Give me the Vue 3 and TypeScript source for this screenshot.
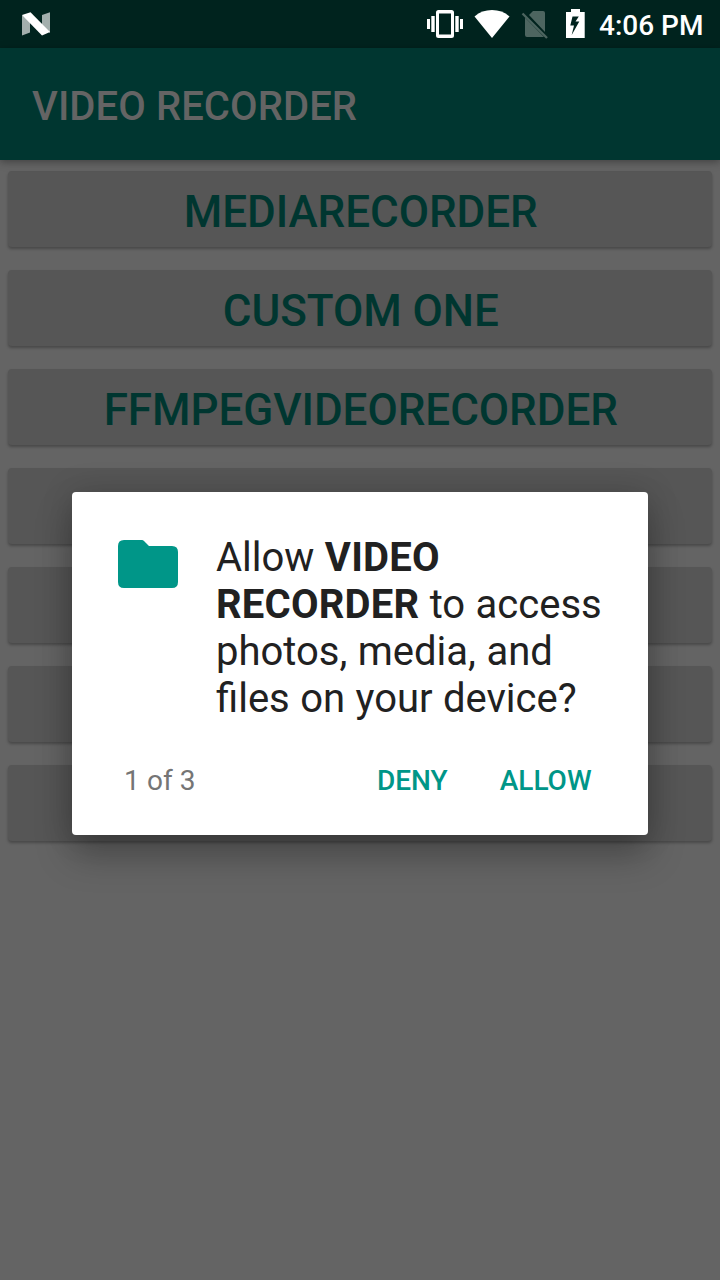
<script setup lang="ts">
const buttons: string[] = ['MEDIARECORDER', 'CUSTOM ONE', 'FFMPEGVIDEORECORDER', '', '', '', '']
</script>

<template>
  <div class="screen">
    <header class="status">
      <svg class="logo" width="28" height="24" viewBox="0 0 28 24">
        <path d="M0 3V23.500L8 20.500V8ZM28 .3L20 3V14L28 21Z" fill="#a3afad" />
        <path d="M0 3L8.500 .3 28 20 20 23.500Z" fill="#fff" />
      </svg>
      <svg class="icons" width="145" height="48" viewBox="0 0 145 48">
        <g fill="#fff">
          <path d="M17 19h3v10h-3zM21.300 16h3.400v16H21.300zM45.300 16H48.700v16h-3.400zM50 19h3v10h-3z" />
          <path fill-rule="evenodd" d="M28.500 10h13q2.500 0 2.500 2.500v23q0 2.500-2.500 2.500h-13q-2.500 0-2.500-2.500v-23q0-2.500 2.500-2.500ZM29 13.500v21h12v-21Z" />
          <path d="M64.500 16.400Q72 10 82 10T99.500 16.400L82 38Z" />
        </g>
        <path d="M119 15L123 11H133Q135 11 135 13V32ZM115 17.500L134 37H117Q115 37 115 35Z" fill="#4d6560" />
        <path d="M112.500 13.500L137 38" stroke="#4d6560" stroke-width="2.300" />
      </svg>
      <svg class="battery" width="20" height="30" viewBox="0 0 20 30">
        <path fill="#fff" fill-rule="evenodd" d="M6 0h9v3h4.700v26H1V3h5ZM7.500 7.500L5.300 16.500H9L6.700 26 14.300 12.500H10.500L13.800 7.500Z" />
      </svg>
      <span class="time">4:06 PM</span>
    </header>
    <div class="bar">VIDEO RECORDER</div>
    <main class="list">
      <button v-for="(label, i) in buttons" :key="i" class="item">{{ label }}</button>
    </main>
    <section class="dialog">
      <div class="message">
        <svg class="folder" width="60" height="48" viewBox="0 0 60 48">
          <path d="M6 0H24Q25 0 26 1L31 6H54Q60 6 60 12V42Q60 48 54 48H6Q0 48 0 42V6Q0 0 6 0Z" fill="#009688" />
        </svg>
        <p>Allow <b>VIDEO<br>RECORDER</b> to access<br>photos, media, and<br>files on your device?</p>
      </div>
      <div class="actions">
        <span class="count">1 of 3</span>
        <button class="deny">DENY</button>
        <button class="allow">ALLOW</button>
      </div>
    </section>
  </div>
</template>

<style>
body { margin: 0; }
</style>

<style scoped>
.screen {
  position: relative;
  width: 720px;
  height: 1280px;
  overflow: hidden;
  background: #646464;
  font-family: Roboto, sans-serif;
}
button {
  border: 0;
  padding: 0;
  background: none;
  font-family: inherit;
  font-weight: 500;
  white-space: nowrap;
}
.status {
  display: flex;
  height: 48px;
  background: #00231e;
  color: #fff;
}
.logo { margin: 12px 0 0 22px; flex: none; }
.icons { margin-left: 360px; flex: none; }
.battery { margin: 9px 0 0 10px; flex: none; }
.time {
  margin-left: 14px;
  font-size: 28px;
  font-weight: 500;
  line-height: 51px;
  white-space: nowrap;
}
.bar {
  position: relative;
  height: 112px;
  box-sizing: border-box;
  padding-left: 32px;
  background: #003630;
  box-shadow: 0 2px 8px rgba(0, 0, 0, .35);
  color: #646464;
  font-size: 40px;
  font-weight: 500;
  letter-spacing: .09px;
  line-height: 118px;
}
.list {
  display: flex;
  flex-direction: column;
  gap: 23px;
  padding: 11px 8px 0;
}
.item {
  height: 76px;
  border-radius: 4px;
  background: #565656;
  box-shadow: 0 2px 3px rgba(0, 0, 0, .28);
  color: #003630;
  font-size: 44px;
  letter-spacing: -.05px;
  line-height: 82px;
  text-indent: 1.5px;
}
.dialog {
  position: absolute;
  left: 72px;
  top: 492px;
  width: 576px;
  height: 343px;
  box-sizing: border-box;
  padding: 42px 46px 0;
  border-radius: 4px;
  background: #fff;
  box-shadow: 0 20px 36px rgba(0, 0, 0, .27), 0 0 32px rgba(0, 0, 0, .15);
}
.message { display: flex; }
.folder { margin-top: 6px; flex: none; }
p {
  margin: 0 0 0 38px;
  color: #212121;
  font-size: 40px;
  line-height: 47px;
  word-spacing: .5px;
  white-space: nowrap;
}
b { font-weight: 700; letter-spacing: .2px; }
.actions {
  display: flex;
  margin-top: 42px;
  padding-left: 6px;
  font-size: 28px;
  line-height: 33px;
}
.count { width: 253px; color: #757575; letter-spacing: .1px; }
.actions button { color: #009688; font-size: 28px; line-height: 33px; }
.allow { margin-left: 52px; }
</style>
